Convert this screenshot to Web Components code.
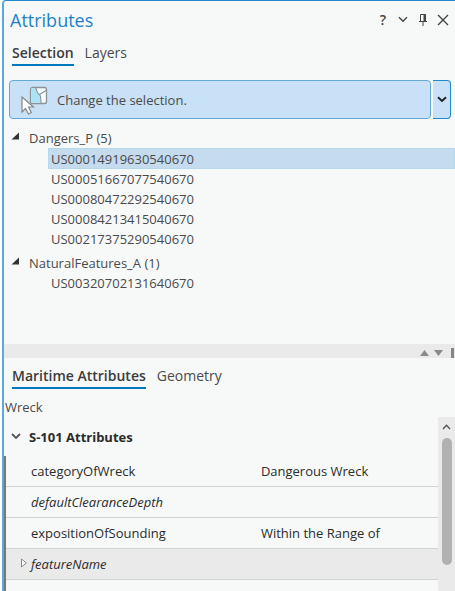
<!DOCTYPE html>
<html lang="en">
<head>
<meta charset="utf-8">
<meta name="viewport" content="width=device-width, initial-scale=1">
<title>Attributes</title>
<style>
  :root {
    --color-back: #f7f9f9;
    --color-bar: #eaeaea;
    --color-accent: #0079c1;
    --color-text: #4a4a4a;
    --color-dark: #2b2b2b;
  }

  body {
    margin: 0;
    background-color: #fff;
    color: var(--color-text);
    font-family: "Open Sans", "Noto Sans", sans-serif;
    font-size: 13px;
  }
</style>
</head>
<body>
<attributes-pane></attributes-pane>

<script>
const DANGERS = [
  'US00014919630540670',
  'US00051667077540670',
  'US00080472292540670',
  'US00084213415040670',
  'US00217375290540670'
];

const FEATURES = ['US00320702131640670'];

const ATTRIBUTES = [
  { name: 'categoryOfWreck', value: 'Dangerous Wreck' },
  { name: 'defaultClearanceDepth', value: '', optional: true },
  { name: 'expositionOfSounding', value: 'Within the Range of' },
  { name: 'featureName', value: '', optional: true, complex: true },
  { name: '', value: '' }
];

class PaneHeader extends HTMLElement {
  constructor () {
    super();
    this.attachShadow({ mode: 'open' });
  }

  static get styles () {
    return `
      :host {
        display: flex;
        align-items: center;
        justify-content: space-between;
        height: 37px;
        padding: 0 4px 0 6px;
      }

      h1 {
        margin: 0;
        font-size: 18px;
        line-height: 24px;
        font-weight: 400;
        color: #1c82c8;
      }

      .header__tools {
        display: flex;
        gap: 4px;
      }

      button {
        display: grid;
        place-items: center;
        width: 16px;
        height: 20px;
        padding: 0;
        border: 0;
        background: none;
        color: #444;
        font: 600 14px/20px "Open Sans", sans-serif;
      }

      svg {
        fill: none;
        stroke: currentColor;
      }
    `;
  }

  connectedCallback () {
    this.shadowRoot.innerHTML = `
      <style>${PaneHeader.styles}</style>
      <h1><slot></slot></h1>
      <div class="header__tools">
        <button aria-label="Help">?</button>
        <button aria-label="Options">
          <svg width="10" height="7" viewBox="0 0 10 7" stroke-width="1.4"><path d="M1 1.2l4 4 4-4"/></svg>
        </button>
        <button aria-label="Pin">
          <svg width="10" height="12" viewBox="0 0 10 12" stroke-width="1"><path d="M2.500 7.500v-7h5v7M1 7.500h8M5 7.500V12"/><path d="M6.500 .500v7" stroke-width="2"/></svg>
        </button>
        <button aria-label="Close">
          <svg width="12" height="12" viewBox="0 0 12 12" stroke-width="1.4"><path d="M1 1l10 10M11 1L1 11"/></svg>
        </button>
      </div>`;
  }
}

class PaneTabs extends HTMLElement {
  constructor () {
    super();
    this.attachShadow({ mode: 'open' });
  }

  static get styles () {
    return `
      :host {
        display: flex;
        gap: 11px;
        padding: 0 8px;
      }

      button {
        padding: 0 0 1px;
        border: 0;
        border-bottom: 2px solid transparent;
        background: none;
        color: var(--color-text);
        font: inherit;
        font-size: 14px;
        line-height: 20px;
      }

      button[aria-selected="true"] {
        border-color: var(--color-accent);
        color: #3c3c3c;
        font-weight: 600;
      }
    `;
  }

  connectedCallback () {
    const labels = this.getAttribute('labels').split(',');
    const tabs = labels.map((label, i) => `<button role="tab" aria-selected="${i === 0}">${label}</button>`);
    this.setAttribute('role', 'tablist');
    this.shadowRoot.innerHTML = `<style>${PaneTabs.styles}</style>${tabs.join('')}`;
  }
}

class SelectionButton extends HTMLElement {
  constructor () {
    super();
    this.attachShadow({ mode: 'open' });
  }

  static get styles () {
    return `
      :host {
        display: flex;
        gap: 2px;
        height: 39px;
        margin: 0 4px 0 5px;
      }

      button {
        display: flex;
        align-items: center;
        box-sizing: border-box;
        border: 1px solid #62a9d8;
        background-color: #c8e1f6;
        color: var(--color-text);
        font: inherit;
      }

      .button__main {
        flex: 1;
        gap: 8px;
        padding: 0 11px;
        border-radius: 4px;
      }

      .button__menu {
        justify-content: center;
        width: 18px;
        padding: 0;
        border: 1px solid #2388cc;
        border-left: 0;
        border-radius: 0 4px 4px 0;
      }
    `;
  }

  connectedCallback () {
    this.shadowRoot.innerHTML = `
      <style>${SelectionButton.styles}</style>
      <button class="button__main">
        <svg width="28" height="30" viewBox="0 0 28 30">
          <rect x="9.500" y="2.500" width="16" height="16" rx="2" fill="#f6f8fa" stroke="#8b9299" stroke-width="1.300"/>
          <path d="M10.200 3.200h5l1 4 3 4 .500 6.600h-9.500z" fill="#aae3f3"/>
          <path d="M14.800 3l1.600 4.500 3 3.500.700 7M18.500 9.500l6.500-4" fill="none" stroke="#8b9299" stroke-width="1.100"/>
          <path d="M1 12v15l3.500-3.500 3 5.500 2.800-1.400-2.800-5.600h5z" fill="#fff" stroke="#858585" stroke-width="1.200"/>
        </svg>
        <slot></slot>
      </button>
      <button class="button__menu" aria-label="Selection tools">
        <svg width="10" height="7" viewBox="0 0 10 7" fill="none" stroke="#222" stroke-width="2"><path d="M1 1.300l4 3.700 4-3.700"/></svg>
      </button>`;
  }
}

class TreeGroup extends HTMLElement {
  constructor () {
    super();
    this.attachShadow({ mode: 'open' });
  }

  static get styles () {
    return `
      :host {
        display: block;
      }

      button {
        display: flex;
        align-items: center;
        padding: 0;
        border: 0;
        background: none;
        color: inherit;
        font: inherit;
      }

      .tree__head {
        gap: 9px;
        height: 21px;
        padding-left: 7px;
      }

      .tree__head svg {
        margin-bottom: 4px;
      }

      ul {
        margin: 0 0 0 44px;
        padding: 0;
        list-style: none;
      }

      .tree__item {
        box-sizing: border-box;
        width: 100%;
        height: 20px;
        padding-left: 3px;
      }

      .tree__item--selected {
        height: 21px;
        padding-left: 2px;
        border: 1px solid #b5d8ed;
        background-color: #c5dbee;
      }
    `;
  }

  set items (items) {
    const selected = this.getAttribute('selected');
    const rows = items.map(id => `
      <li><button class="tree__item ${id === selected ? 'tree__item--selected' : ''}">${id}</button></li>`);
    this.shadowRoot.innerHTML = `
      <style>${TreeGroup.styles}</style>
      <button class="tree__head" aria-expanded="true">
        <svg width="9" height="8" viewBox="0 0 9 8"><path d="M8 .500v7H.500z" fill="#333"/></svg>
        <span>${this.getAttribute('label')} (${items.length})</span>
      </button>
      <ul>${rows.join('')}</ul>`;
  }
}

class PaneSplitter extends HTMLElement {
  constructor () {
    super();
    this.attachShadow({ mode: 'open' });
  }

  static get styles () {
    return `
      :host {
        display: flex;
        align-items: center;
        justify-content: flex-end;
        gap: 5px;
        height: 14px;
        padding-right: 1px;
        background-color: var(--color-bar);
      }

      button {
        display: flex;
        padding: 3px 0 0;
        border: 0;
        background: none;
      }

      .splitter__grip {
        width: 3px;
        height: 10px;
        margin: 3px 0 0 3px;
        background-color: #858585;
      }
    `;
  }

  connectedCallback () {
    this.shadowRoot.innerHTML = `
      <style>${PaneSplitter.styles}</style>
      <button aria-label="Expand up"><svg width="9" height="6" viewBox="0 0 9 6" fill="#8a8a8a"><path d="M4.500 0L9 6H0z"/></svg></button>
      <button aria-label="Expand down"><svg width="9" height="6" viewBox="0 0 9 6" fill="#8a8a8a"><path d="M0 0h9L4.500 6z"/></svg></button>
      <span class="splitter__grip"></span>`;
  }
}

class AttributeTable extends HTMLElement {
  constructor () {
    super();
    this.attachShadow({ mode: 'open' });
  }

  static get styles () {
    return `
      :host {
        display: block;
        color: var(--color-dark);
      }

      .section {
        display: flex;
        align-items: center;
        gap: 8px;
        height: 39px;
        padding: 0 0 0 7px;
        border: 0;
        background: none;
        color: inherit;
        font: inherit;
        font-weight: 700;
      }

      table {
        width: 100%;
        table-layout: fixed;
        border-collapse: separate;
        border-spacing: 0;
        border-left: 2px solid #777;
      }

      th, td {
        height: 30px;
        padding: 0;
        border-bottom: 1px solid #d2d2d2;
        text-align: left;
        font-weight: 400;
      }

      th {
        width: 59%;
      }

      .name {
        display: grid;
        grid-template-columns: 25px 1fr;
        align-items: center;
      }

      .name button {
        display: flex;
        grid-column: 1;
        justify-content: flex-end;
        padding: 0 4px 3px 0;
        border: 0;
        background: none;
      }

      .name span {
        grid-column: 2;
      }

      .optional {
        font-style: italic;
      }

      .complex > * {
        background-color: var(--color-bar);
      }
    `;
  }

  set rows (rows) {
    const arrow = `
      <button aria-label="Expand">
        <svg width="6" height="10" viewBox="0 0 6 10" fill="#fff" stroke="#888"><path d="M.500 1v8L5.300 5z"/></svg>
      </button>`;
    const body = rows.map(row => `
      <tr class="${row.complex ? 'complex' : ''}">
        <th scope="row" class="${row.optional ? 'optional' : ''}">
          <div class="name">${row.complex ? arrow : ''}<span>${row.name}</span></div>
        </th>
        <td>${row.value}</td>
      </tr>`);
    this.shadowRoot.innerHTML = `
      <style>${AttributeTable.styles}</style>
      <button class="section" aria-expanded="true">
        <svg width="10" height="7" viewBox="0 0 10 7" fill="none" stroke="#555" stroke-width="1.800"><path d="M1 1l4 4 4-4"/></svg>
        <span>${this.getAttribute('label')}</span>
      </button>
      <table>${body.join('')}</table>`;
  }
}

class PaneScroll extends HTMLElement {
  constructor () {
    super();
    this.attachShadow({ mode: 'open' });
  }

  static get styles () {
    return `
      :host {
        display: flex;
        overflow: hidden;
      }

      .scroll__view {
        flex: 1;
        min-width: 0;
      }

      .scroll__bar {
        display: flex;
        flex-direction: column;
        align-items: center;
        gap: 8px;
        width: 17px;
        padding-top: 7px;
        box-sizing: border-box;
        background-color: var(--color-bar);
      }

      button {
        display: flex;
        padding: 0;
        border: 0;
        background: none;
      }

      .scroll__thumb {
        width: 10px;
        height: 127px;
        margin-left: 1px;
        border-radius: 5px;
        background-color: #b1b1b1;
      }
    `;
  }

  connectedCallback () {
    this.shadowRoot.innerHTML = `
      <style>${PaneScroll.styles}</style>
      <div class="scroll__view"><slot></slot></div>
      <div class="scroll__bar">
        <button aria-label="Scroll up">
          <svg width="9" height="6" viewBox="0 0 9 6" fill="none" stroke="#555" stroke-width="1.400"><path d="M1 5l3.500-3.700L8 5"/></svg>
        </button>
        <div class="scroll__thumb"></div>
      </div>`;
  }
}

class AttributesPane extends HTMLElement {
  constructor () {
    super();
    this.attachShadow({ mode: 'open' });
  }

  static get styles () {
    return `
      :host {
        display: flex;
        flex-direction: column;
        box-sizing: border-box;
        height: 100vh;
        margin-left: 2px;
        border-top: 1px solid #2388cc;
        border-left: 2px solid #5aa9de;
        border-top-left-radius: 4px;
        background-color: var(--color-back);
        overflow: hidden;
      }

      .pane__tabs {
        margin-top: 5px;
      }

      selection-button {
        margin-top: 14px;
      }

      .pane__tree {
        display: flex;
        flex-direction: column;
        gap: 3px;
        height: 225px;
        padding-top: 8px;
        box-sizing: border-box;
      }

      .pane__tabs--lower {
        margin-top: 8px;
      }

      p {
        margin: 8px 1px 0;
        line-height: 20px;
      }

      pane-scroll {
        flex: 1;
      }
    `;
  }

  connectedCallback () {
    this.shadowRoot.innerHTML = `
      <style>${AttributesPane.styles}</style>
      <pane-header>Attributes</pane-header>
      <pane-tabs class="pane__tabs" labels="Selection,Layers"></pane-tabs>
      <selection-button>Change the selection.</selection-button>
      <div class="pane__tree">
        <tree-group id="dangers" label="Dangers_P" selected="US00014919630540670"></tree-group>
        <tree-group id="features" label="NaturalFeatures_A"></tree-group>
      </div>
      <pane-splitter></pane-splitter>
      <pane-tabs class="pane__tabs--lower" labels="Maritime Attributes,Geometry"></pane-tabs>
      <p>Wreck</p>
      <pane-scroll>
        <attribute-table label="S-101 Attributes"></attribute-table>
      </pane-scroll>`;
    this.shadowRoot.querySelector('#dangers').items = DANGERS;
    this.shadowRoot.querySelector('#features').items = FEATURES;
    this.shadowRoot.querySelector('attribute-table').rows = ATTRIBUTES;
  }
}

customElements.define('pane-header', PaneHeader);
customElements.define('pane-tabs', PaneTabs);
customElements.define('selection-button', SelectionButton);
customElements.define('tree-group', TreeGroup);
customElements.define('pane-splitter', PaneSplitter);
customElements.define('attribute-table', AttributeTable);
customElements.define('pane-scroll', PaneScroll);
customElements.define('attributes-pane', AttributesPane);
</script>
</body>
</html>
